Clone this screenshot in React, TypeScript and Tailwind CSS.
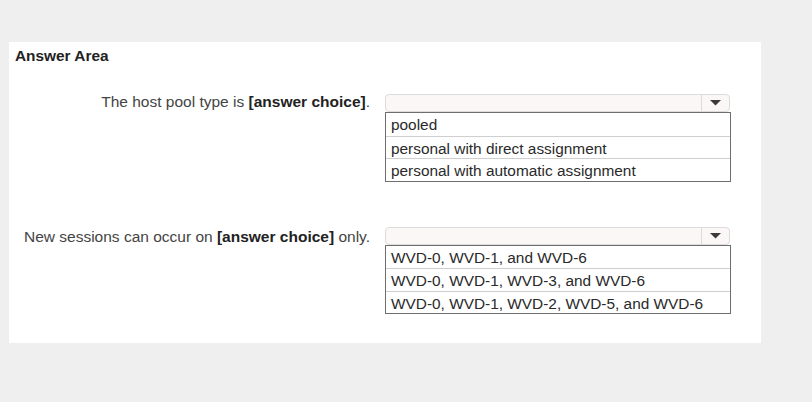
import React from "react";

const font = { fontFamily: '"Liberation Sans", Arial, sans-serif' };

function Dropdown({ options }: { options: string[] }) {
  return (
    <div className="w-[346px] flex flex-col">
      <div className="h-[18px] w-[345px] rounded-[4px] border border-[#dcdcdc] bg-[#fbf7f7] flex">
        <div className="flex-1" />
        <div className="w-[28px] border-l border-[#dcdcdc] flex items-center justify-center">
          <svg width="11" height="6" viewBox="0 0 11 6">
            <polygon points="0,0 11,0 5.5,5.5" fill="#3a3a3a" />
          </svg>
        </div>
      </div>
      <div className="border border-[#6e6e6e] bg-white">
        {options.map((o, i) => (
          <div
            key={o}
            className={
              "h-[22.5px] leading-[23px] pl-[5px] text-[15.4px] text-[#2a2a2a] whitespace-nowrap" +
              (i > 0 ? " border-t border-[#cfcfcf]" : "")
            }
          >
            {o}
          </div>
        ))}
      </div>
    </div>
  );
}

export default function App() {
  return (
    <div className="w-[812px] h-[402px] bg-[#efefef] pt-[42px] pl-[9px]" style={font}>
      <div className="w-[752px] h-[301px] bg-white pt-[5px] pl-[6px]">
        <div className="text-[15.4px] leading-[18px] font-bold text-[#222]">Answer Area</div>
        <div className="mt-[29px] flex items-start">
          <div className="w-[355px] text-right text-[15.5px] leading-[18px] text-[#444] whitespace-nowrap mt-[-1px]">
            The host pool type is <span className="font-bold text-[#222]">[answer choice]</span>.
          </div>
          <div className="ml-[15px]">
            <Dropdown
              options={["pooled", "personal with direct assignment", "personal with automatic assignment"]}
            />
          </div>
        </div>
        <div className="mt-[45px] flex items-start">
          <div className="w-[355px] text-right text-[15.5px] leading-[18px] text-[#444] whitespace-nowrap mt-[1px]">
            New sessions can occur on <span className="font-bold text-[#222]">[answer choice]</span> only.
          </div>
          <div className="ml-[15px]">
            <Dropdown
              options={[
                "WVD-0, WVD-1, and WVD-6",
                "WVD-0, WVD-1, WVD-3, and WVD-6",
                "WVD-0, WVD-1, WVD-2, WVD-5, and WVD-6",
              ]}
            />
          </div>
        </div>
      </div>
    </div>
  );
}
